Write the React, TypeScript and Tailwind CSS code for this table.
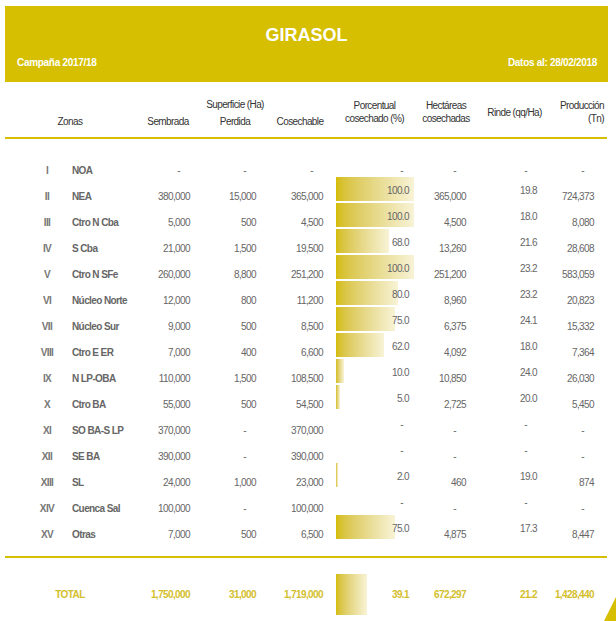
import React from "react";

type Row = {
  num: string;
  zona: string;
  sembrada: string;
  perdida: string;
  cosechable: string;
  pct: number | null;
  hect: string;
  rinde: string;
  prod: string;
};

const ROWS: Row[] = [
  { num: "I", zona: "NOA", sembrada: "-", perdida: "-", cosechable: "-", pct: null, hect: "-", rinde: "-", prod: "-" },
  { num: "II", zona: "NEA", sembrada: "380,000", perdida: "15,000", cosechable: "365,000", pct: 100, hect: "365,000", rinde: "19.8", prod: "724,373" },
  { num: "III", zona: "Ctro N Cba", sembrada: "5,000", perdida: "500", cosechable: "4,500", pct: 100, hect: "4,500", rinde: "18.0", prod: "8,080" },
  { num: "IV", zona: "S Cba", sembrada: "21,000", perdida: "1,500", cosechable: "19,500", pct: 68, hect: "13,260", rinde: "21.6", prod: "28,608" },
  { num: "V", zona: "Ctro N SFe", sembrada: "260,000", perdida: "8,800", cosechable: "251,200", pct: 100, hect: "251,200", rinde: "23.2", prod: "583,059" },
  { num: "VI", zona: "Núcleo Norte", sembrada: "12,000", perdida: "800", cosechable: "11,200", pct: 80, hect: "8,960", rinde: "23.2", prod: "20,823" },
  { num: "VII", zona: "Núcleo Sur", sembrada: "9,000", perdida: "500", cosechable: "8,500", pct: 75, hect: "6,375", rinde: "24.1", prod: "15,332" },
  { num: "VIII", zona: "Ctro E ER", sembrada: "7,000", perdida: "400", cosechable: "6,600", pct: 62, hect: "4,092", rinde: "18.0", prod: "7,364" },
  { num: "IX", zona: "N LP-OBA", sembrada: "110,000", perdida: "1,500", cosechable: "108,500", pct: 10, hect: "10,850", rinde: "24.0", prod: "26,030" },
  { num: "X", zona: "Ctro BA", sembrada: "55,000", perdida: "500", cosechable: "54,500", pct: 5, hect: "2,725", rinde: "20.0", prod: "5,450" },
  { num: "XI", zona: "SO BA-S LP", sembrada: "370,000", perdida: "-", cosechable: "370,000", pct: null, hect: "-", rinde: "-", prod: "-" },
  { num: "XII", zona: "SE BA", sembrada: "390,000", perdida: "-", cosechable: "390,000", pct: null, hect: "-", rinde: "-", prod: "-" },
  { num: "XIII", zona: "SL", sembrada: "24,000", perdida: "1,000", cosechable: "23,000", pct: 2, hect: "460", rinde: "19.0", prod: "874" },
  { num: "XIV", zona: "Cuenca Sal", sembrada: "100,000", perdida: "-", cosechable: "100,000", pct: null, hect: "-", rinde: "-", prod: "-" },
  { num: "XV", zona: "Otras", sembrada: "7,000", perdida: "500", cosechable: "6,500", pct: 75, hect: "4,875", rinde: "17.3", prod: "8,447" },
];

const BAR_MAX = 78;

// dashes sit a little left of the numbers' right edge
function Num({ v, className }: { v: string; className: string }) {
  return <div className={`${className} text-right ${v === "-" ? "pr-[10px]" : ""}`}>{v}</div>;
}

function DataRow({ r, first }: { r: Row; first: boolean }) {
  const main = "pt-[14px]";
  const high = first ? "pt-[14px]" : "pt-[8px]";
  const pctText = r.pct === null ? "-" : r.pct.toFixed(1);
  return (
    <div className="flex h-[26px] leading-[12px]">
      <div className={`w-[62px] pl-[22px] text-center font-bold text-[#777] ${main}`}>{r.num}</div>
      <div className={`w-[68px] pl-[5px] font-bold text-[#666] whitespace-nowrap ${main}`}>{r.zona}</div>
      <Num v={r.sembrada} className={`w-[55px] ${main}`} />
      <Num v={r.perdida} className={`w-[66px] ${main}`} />
      <Num v={r.cosechable} className={`w-[67px] ${main}`} />
      <div className="w-[91px] pl-[13px] grid">
        <div className="col-start-1 row-start-1">
          {r.pct !== null && (
            <div
              className="h-[24px] bg-gradient-to-r from-[#d5bd00] to-[#f8f3d6]"
              style={{ width: Math.max(2, Math.round((r.pct / 100) * BAR_MAX)) }}
            />
          )}
        </div>
        <div className={`col-start-1 row-start-1 text-right pr-[5px] ${high} ${r.pct === null ? "pr-[11px]" : ""}`}>
          {pctText}
        </div>
      </div>
      <Num v={r.hect} className={`w-[52px] ${main}`} />
      <Num v={r.rinde} className={`w-[71px] ${high}`} />
      <Num v={r.prod} className={`w-[57px] ${main}`} />
    </div>
  );
}

export default function App() {
  return (
    <div
      className="relative w-[616px] h-[621px] bg-white overflow-hidden text-[10px] tracking-[-0.6px] text-[#666]"
      style={{ fontFamily: '"Liberation Sans", Arial, sans-serif' }}
    >
      <div className="ml-[5px] w-[603px] pt-[6px]">
        {/* Title band */}
        <div className="h-[76px] bg-[#d5bf00] text-white flex flex-col pt-[18px]">
          <div className="text-center text-[18px] leading-[22px] font-bold tracking-normal">GIRASOL</div>
          <div className="mt-[11px] flex justify-between pl-[12px] pr-[11px] text-[10px] leading-[12px] font-bold tracking-[-0.3px]">
            <span>Campaña 2017/18</span>
            <span>Datos al: 28/02/2018</span>
          </div>
        </div>

        {/* Column headers */}
        <div className="flex h-[55px] leading-[13px] text-[#333] text-center">
          <div className="w-[130px] pt-[33px]">Zonas</div>
          <div className="w-[66px] pt-[33px]">Sembrada</div>
          <div className="w-[68px] pt-[16px] flex flex-col items-center">
            <span className="whitespace-nowrap">Superficie (Ha)</span>
            <span className="mt-[4px]">Perdida</span>
          </div>
          <div className="w-[62px] pt-[33px]">Cosechable</div>
          <div className="w-[87px] pt-[17px]">
            Porcentual
            <br />
            cosechado (%)
          </div>
          <div className="w-[56px] pt-[17px]">
            Hectáreas
            <br />
            cosechadas
          </div>
          <div className="w-[81px] pt-[24px]">Rinde (qq/Ha)</div>
          <div className="w-[49px] pt-[17px] text-right">
            Producción
            <br />
            (Tn)
          </div>
        </div>
        <div className="h-[2px] w-[602px] bg-[#d5bf00]" />

        {/* Body */}
        <div className="mt-[12px]">
          {ROWS.map((r, i) => (
            <DataRow key={r.num} r={r} first={i === 0} />
          ))}
        </div>

        <div className="mt-[15px] h-[2px] w-[602px] bg-[#d5bf00]" />

        {/* Total */}
        <div className="mt-[16px] flex items-center h-[41px] font-bold text-[#d3be2c]">
          <div className="w-[130px] text-center">TOTAL</div>
          <div className="w-[55px] text-right">1,750,000</div>
          <div className="w-[66px] text-right">31,000</div>
          <div className="w-[67px] text-right">1,719,000</div>
          <div className="w-[91px] pl-[13px] grid items-center">
            <div className="col-start-1 row-start-1 h-[41px] w-[31px] bg-gradient-to-r from-[#d5bd00] to-[#f8f3d6]" />
            <div className="col-start-1 row-start-1 text-right pr-[5px]">39.1</div>
          </div>
          <div className="w-[52px] text-right">672,297</div>
          <div className="w-[71px] text-right">21.2</div>
          <div className="w-[57px] text-right">1,428,440</div>
        </div>
      </div>

      {/* corner marker */}
      <svg className="absolute right-0 bottom-0" width="12" height="24" viewBox="0 0 12 24">
        <polygon points="0,24 12,0 12,24" fill="#d5bf00" />
      </svg>
    </div>
  );
}
